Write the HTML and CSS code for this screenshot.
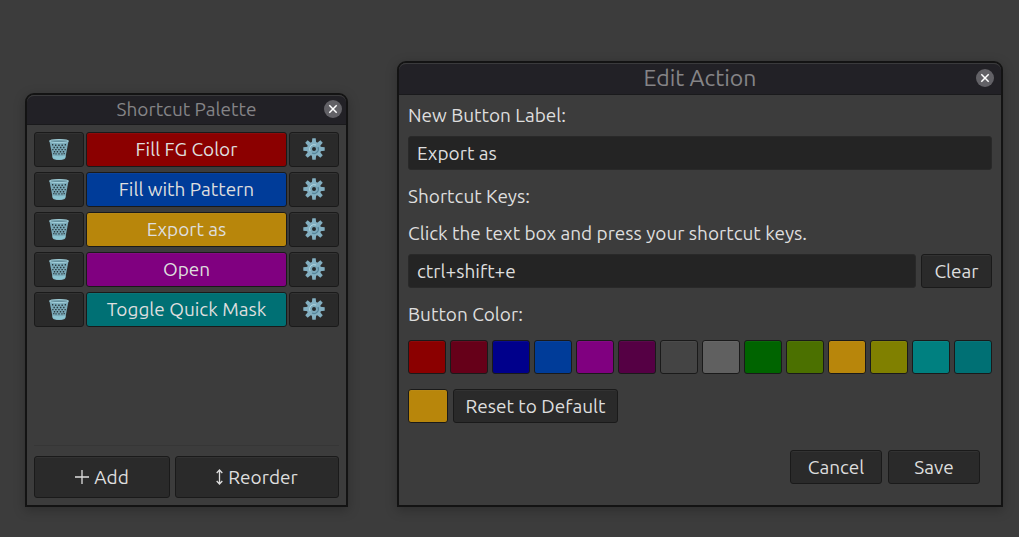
FILE: index.html
```html
<!DOCTYPE html>
<html lang="en">
<head>
<meta charset="utf-8">
<meta name="viewport" content="width=device-width, initial-scale=1">
<title>Shortcut Palette</title>
<link rel="stylesheet" href="styles.css">
</head>
<body>
<svg class="sprites" aria-hidden="true">
  <symbol id="trash" viewBox="0 0 20 21">
    <path d="M.4 1.800 3.700 19Q4.500 21 10 21T16.300 19L19.600 1.800Z" fill="#7babba"/>
    <g fill="#2b3a40">
      <path d="M3 5h1.300v1.500H3zM6 5.500h1.400V7H6zM9.200 5.500h1.500V7H9.200zM12.500 5.500h1.400V7h-1.400zM15.700 5H17v1.500h-1.300z"/>
      <path d="M4.500 7.700h1.400v1.500H4.500zM7.600 7.700h1.500v1.500H7.600zM10.900 7.700h1.500v1.500h-1.500zM14.100 7.700h1.400v1.500h-1.400z"/>
      <path d="M3.200 9.900h1.300v1.400H3.200zM6.100 9.900h1.500v1.400H6.100zM9.200 9.900h1.500v1.400H9.200zM12.400 9.900h1.500v1.400h-1.500zM15.500 9.900h1.300v1.400h-1.300z"/>
      <path d="M4.800 12h1.400v1.400H4.800zM7.700 12h1.400v1.400H7.700zM10.800 12h1.400v1.400h-1.400zM13.800 12h1.400v1.400h-1.400z"/>
      <path d="M4.200 14h1.200v1.300H4.200zM6.400 14.200h1.300v1.300H6.400zM9.300 14.200h1.400v1.300H9.300zM12.300 14.200h1.300v1.300h-1.300zM14.600 14h1.200v1.300h-1.200z"/>
    </g>
    <path d="M3.300 16.600Q10 18 16.700 16.600L16.100 19.300Q10 22 3.900 19.300Z" fill="#8cc5d2"/>
    <ellipse cx="10" cy="2.100" rx="9.300" ry="1.500" fill="#66919f" stroke="#9fcdd8" stroke-width="1.100"/>
  </symbol>
  <symbol id="gear" viewBox="-11 -11 22 22">
    <g fill="#83afc1">
      <circle r="7.200"/>
      <path id="teeth" d="M-2.200-6-1.700-10.700H1.700L2.200-6ZM-2.200 6-1.700 10.700H1.700L2.200 6Z"/>
      <use href="#teeth" transform="rotate(45)"/>
      <use href="#teeth" transform="rotate(90)"/>
      <use href="#teeth" transform="rotate(135)"/>
    </g>
    <circle r="3.800" fill="#7ba8ba"/>
    <path d="M-4 2A4.500 4.500 0 0 1 2-4" fill="none" stroke="#b0d5df" stroke-width="1"/>
    <path d="M4 -2A4.500 4.500 0 0 1 -2 4" fill="none" stroke="#55849a" stroke-width="1.200"/>
    <circle r="2" fill="#25292b"/>
  </symbol>
  <symbol id="close" viewBox="0 0 18 18">
    <circle cx="9" cy="9" r="9" fill="#626166"/>
    <path d="M5.300 5.300l7.400 7.400M12.700 5.300l-7.400 7.400" stroke="#fff" stroke-width="1.500"/>
  </symbol>
</svg>
<main class="desktop">
  <section class="window palette" aria-labelledby="palette-title">
    <header class="titlebar">
      <h1 class="title" id="palette-title">Shortcut Palette</h1>
      <button class="close" aria-label="Close palette"><svg><use href="#close"/></svg></button>
    </header>
    <div class="palette-body">
      <ul class="actions">
        <li class="action"><button class="btn" aria-label="Delete Fill FG Color"><svg class="trash"><use href="#trash"/></svg></button><button class="btn red">Fill FG Color</button><button class="btn" aria-label="Edit Fill FG Color"><svg class="gear"><use href="#gear"/></svg></button></li>
        <li class="action"><button class="btn" aria-label="Delete Fill with Pattern"><svg class="trash"><use href="#trash"/></svg></button><button class="btn blue">Fill with Pattern</button><button class="btn" aria-label="Edit Fill with Pattern"><svg class="gear"><use href="#gear"/></svg></button></li>
        <li class="action"><button class="btn" aria-label="Delete Export as"><svg class="trash"><use href="#trash"/></svg></button><button class="btn gold">Export as</button><button class="btn" aria-label="Edit Export as"><svg class="gear"><use href="#gear"/></svg></button></li>
        <li class="action"><button class="btn" aria-label="Delete Open"><svg class="trash"><use href="#trash"/></svg></button><button class="btn purple">Open</button><button class="btn" aria-label="Edit Open"><svg class="gear"><use href="#gear"/></svg></button></li>
        <li class="action"><button class="btn" aria-label="Delete Toggle Quick Mask"><svg class="trash"><use href="#trash"/></svg></button><button class="btn teal-dark">Toggle Quick Mask</button><button class="btn" aria-label="Edit Toggle Quick Mask"><svg class="gear"><use href="#gear"/></svg></button></li>
      </ul>
      <footer class="palette-footer">
        <button class="btn"><svg class="plus" viewBox="0 0 14 14" aria-hidden="true"><path d="M7 0v14M0 7h14"/></svg>Add</button>
        <button class="btn"><svg class="updown" viewBox="0 0 7 16" aria-hidden="true"><path d="M3.500 1v14M.7 4 3.500 1 6.300 4M.7 12l2.800 3 2.800-3"/></svg>Reorder</button>
      </footer>
    </div>
  </section>

  <section class="window dialog" aria-labelledby="dialog-title">
    <header class="titlebar large">
      <h2 class="title" id="dialog-title">Edit Action</h2>
      <button class="close" aria-label="Close dialog"><svg><use href="#close"/></svg></button>
    </header>
    <form class="form">
      <label for="label">New Button Label:</label>
      <input class="field" id="label" type="text" value="Export as">
      <label class="section" for="keys">Shortcut Keys:</label>
      <p class="hint">Click the text box and press your shortcut keys.</p>
      <div class="keys">
        <input class="field" id="keys" type="text" value="ctrl+shift+e">
        <button class="btn" type="button">Clear</button>
      </div>
      <p class="section">Button Color:</p>
      <div class="swatches">
        <button type="button" class="btn red" aria-label="Red"></button>
        <button type="button" class="btn maroon" aria-label="Maroon"></button>
        <button type="button" class="btn navy" aria-label="Navy"></button>
        <button type="button" class="btn blue" aria-label="Blue"></button>
        <button type="button" class="btn purple" aria-label="Purple"></button>
        <button type="button" class="btn plum" aria-label="Plum"></button>
        <button type="button" class="btn charcoal" aria-label="Charcoal"></button>
        <button type="button" class="btn gray" aria-label="Gray"></button>
        <button type="button" class="btn green" aria-label="Green"></button>
        <button type="button" class="btn moss" aria-label="Moss"></button>
        <button type="button" class="btn gold" aria-label="Gold"></button>
        <button type="button" class="btn olive" aria-label="Olive"></button>
        <button type="button" class="btn teal" aria-label="Teal"></button>
        <button type="button" class="btn teal-dark" aria-label="Dark teal"></button>
      </div>
      <div class="current">
        <button type="button" class="btn gold" aria-label="Current color"></button>
        <button type="button" class="btn">Reset to Default</button>
      </div>
      <div class="dialog-actions">
        <button type="button" class="btn">Cancel</button>
        <button type="submit" class="btn">Save</button>
      </div>
    </form>
  </section>
</main>
</body>
</html>
```
FILE: styles.css
```css
* { box-sizing: border-box; }
body {
  margin: 0;
  background: #3c3c3c;
  color: #dedede;
  font: 400 19px/24px Ubuntu, "Noto Sans", sans-serif;
}
button, input { font: inherit; color: inherit; }
p, h1, h2, ul { margin: 0; padding: 0; }
.sprites { position: absolute; width: 0; height: 0; }
.desktop {
  display: flex;
  align-items: flex-end;
  gap: 49px;
  min-height: 100vh;
  padding: 30px 16px 30px 25px;
}
.window {
  display: flex;
  flex-direction: column;
  border: 2px solid #131313;
  border-radius: 9px 9px 0 0;
  background: #3c3c3c;
  box-shadow: 0 3px 12px rgba(0, 0, 0, .25);
}
.palette { flex: 0 0 323px; min-height: 414px; }
.dialog { flex: 1; min-width: 0; }
.titlebar {
  display: grid;
  grid-template-columns: 22px 1fr 22px;
  align-items: center;
  height: 30px;
  padding-bottom: 2px;
  border-top: 1px solid #3a3a3c;
  border-bottom: 1px solid #1a1a1c;
  border-radius: 7px 7px 0 0;
  background: #222126;
}
.title {
  grid-column: 2;
  color: #858487;
  font-size: 19px;
  font-weight: 400;
  text-align: center;
}
.titlebar.large { grid-template-columns: 25px 1fr 25px; height: 32px; }
.large .title { font-size: 23px; }
.close {
  width: 18px;
  height: 18px;
  padding: 0;
  border: 0;
  background: none;
}
.close svg { display: block; width: 18px; height: 18px; }
.palette-body {
  display: flex;
  flex: 1;
  flex-direction: column;
  justify-content: space-between;
  padding: 7px;
}
.btn {
  display: flex;
  align-items: center;
  justify-content: center;
  min-width: 0;
  height: 34px;
  padding: 0 10px;
  border: 1px solid #1a1a1a;
  border-radius: 3px;
  background: #2a2a2a;
  box-shadow: inset 0 1px rgba(255, 255, 255, .04);
  white-space: nowrap;
}
.actions { display: grid; gap: 5px; list-style: none; }
.action { display: grid; grid-template-columns: 50px 1fr 50px; gap: 2px; }
.action .btn { height: 35px; padding-bottom: 1px; }
.trash { flex: none; width: 20px; height: 21px; }
.gear { flex: none; width: 22px; height: 22px; }
.palette-footer {
  display: grid;
  grid-template-columns: 136fr 164fr;
  gap: 5px;
  padding-top: 10px;
  border-top: 1px solid #363636;
}
.palette-footer .btn { gap: 5px; height: 42px; }
.plus, .updown { flex: none; fill: none; stroke: #dedede; stroke-width: 1.3; }
.plus { width: 14px; height: 14px; }
.updown { width: 7px; height: 16px; }
.form { display: flex; flex-direction: column; padding: 8px 9px 21px; }
.field {
  width: 100%;
  min-width: 0;
  height: 34px;
  padding: 0 8px;
  border: 1px solid #292929;
  border-radius: 3px;
  background: #242424;
}
.form > .field { margin-top: 9px; }
.section { margin-top: 14px; }
.hint { margin-top: 13px; }
.keys { display: grid; grid-template-columns: 1fr 71px; gap: 5px; margin-top: 9px; }
.swatches { display: grid; grid-template-columns: repeat(14, 1fr); gap: 4px; margin-top: 14px; }
.swatches .btn { padding: 0; }
.current { display: grid; grid-template-columns: 40px 165px; gap: 5px; margin-top: 15px; }
.dialog-actions {
  display: grid;
  grid-template-columns: 92px 92px;
  justify-content: end;
  gap: 6px;
  margin-top: 27px;
  padding-right: 12px;
}
.red { background: #8b0000; }
.maroon { background: #660019; }
.navy { background: #00008b; }
.blue { background: #003c99; }
.purple { background: #800080; }
.plum { background: #550044; }
.charcoal { background: #444444; }
.gray { background: #606060; }
.green { background: #006400; }
.moss { background: #4b7000; }
.gold { background: #b8860b; }
.olive { background: #808000; }
.teal { background: #008080; }
.teal-dark { background: #007074; }
```
